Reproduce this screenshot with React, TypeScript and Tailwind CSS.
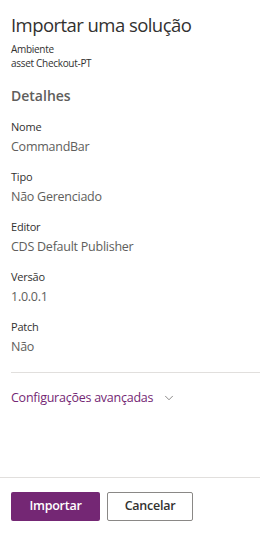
import { ChevronDown } from "lucide-react";

const fields = [
  { label: "Nome", value: "CommandBar" },
  { label: "Tipo", value: "Não Gerenciado" },
  { label: "Editor", value: "CDS Default Publisher" },
  { label: "Versão", value: "1.0.0.1" },
  { label: "Patch", value: "Não" },
];

export default function App() {
  return (
    <div
      className="flex h-[551px] w-[260px] flex-col bg-white text-[#323130]"
      style={{ fontFamily: '"Segoe UI", "Open Sans", sans-serif' }}
    >
      <div className="flex-1 pl-[11px]">
        <h1 className="mt-[12px] text-[18.5px] leading-[26px] font-normal tracking-[-0.03em]">
          Importar uma solução
        </h1>
        <div className="mt-[4px] text-[10px] leading-[14px] tracking-[-0.03em]">Ambiente</div>
        <div className="text-[10px] leading-[14px] tracking-[-0.03em]">asset Checkout-PT</div>

        <h2 className="mt-[16px] text-[14px] leading-[20px] font-semibold text-[#605e5c]">Detalhes</h2>

        <div className="mt-[11px] flex flex-col gap-[10px]">
          {fields.map((f) => (
            <div key={f.label}>
              <div className="text-[11px] leading-[20px] tracking-[-0.02em]">{f.label}</div>
              <div className="text-[12.5px] leading-[20px] tracking-[-0.02em] text-[#605e5c]">{f.value}</div>
            </div>
          ))}
        </div>

        <div className="mt-[15px] h-px bg-[#e1dfdd]" />

        <button className="mt-[15px] flex items-center gap-[9px] text-[12.5px] leading-[20px] tracking-[-0.02em] text-[#742774]">
          Configurações avançadas
          <ChevronDown className="h-[14px] w-[14px] text-[#605e5c]" strokeWidth={1.25} />
        </button>
      </div>

      <div className="border-t border-[#e1dfdd] px-[11px] pt-[14px] pb-[30px]">
        <div className="flex gap-[7px]">
          <button className="h-[29px] w-[89px] rounded-[2px] bg-[#742774] text-[12.5px] font-semibold tracking-[-0.02em] text-white">
            Importar
          </button>
          <button className="h-[29px] w-[86px] rounded-[2px] border border-[#8a8886] bg-white text-[12.5px] font-semibold tracking-[-0.02em] text-[#323130]">
            Cancelar
          </button>
        </div>
      </div>
    </div>
  );
}
